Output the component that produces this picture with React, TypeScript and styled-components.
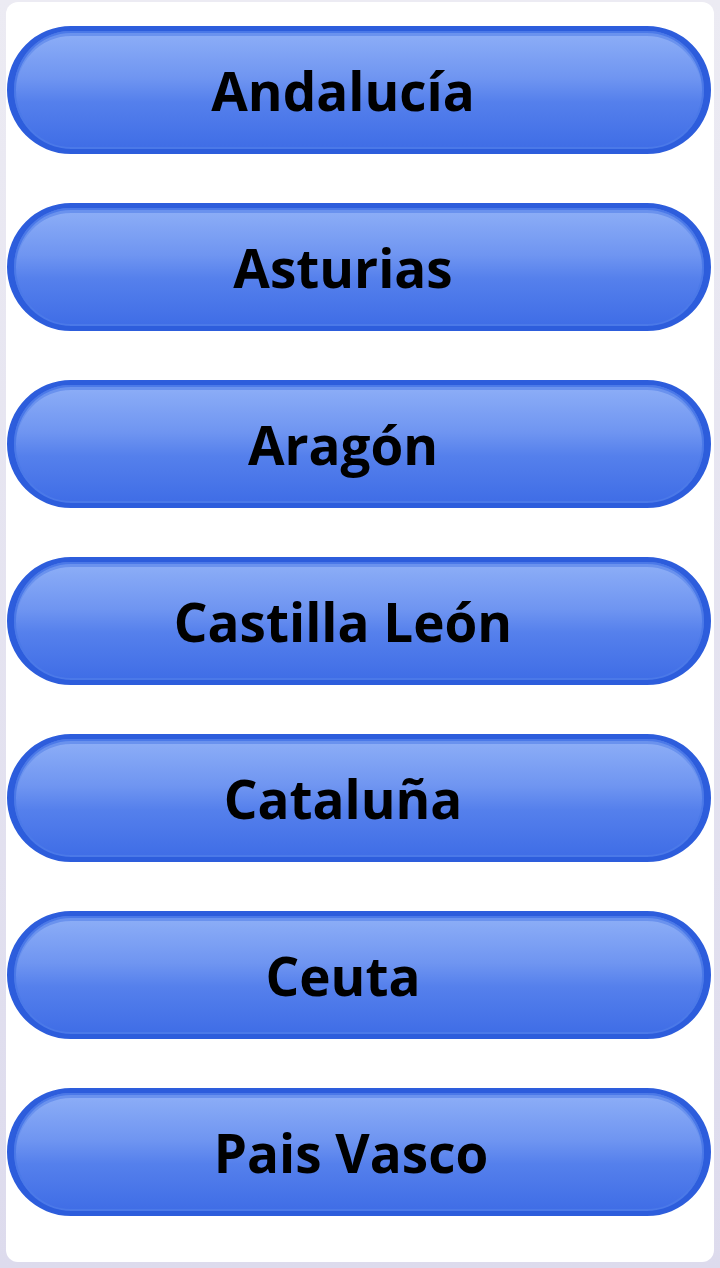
import styled, { createGlobalStyle } from "styled-components";

const GlobalStyle = createGlobalStyle`
  html, body {
    margin: 0;
    padding: 0;
    background: #e2e0ee;
  }
  body {
    font-family: "Open Sans", "Noto Sans", sans-serif;
  }
`;

// start of styled-components

const Screen = styled.div`
  width: 720px;
  height: 1268px;
  box-sizing: border-box;
  padding: 2px 6px 6px 6px;
  background: linear-gradient(180deg, #ecebf3 0%, #dddbed 100%);
`;

const Card = styled.div`
  height: 100%;
  box-sizing: border-box;
  background: #ffffff;
  border-radius: 12px;
  padding: 24px 3px 0 1px;
  display: flex;
  flex-direction: column;
  gap: 49px;
`;

const RegionButton = styled.button<{ $shift?: number }>`
  height: 128px;
  width: 100%;
  box-sizing: border-box;
  border-radius: 64px;
  border: 5px solid #2d5ddc;
  border-left-width: 7px;
  border-right-width: 7px;
  background: linear-gradient(180deg, #8eaff7 0%, #6f95f1 40%, #5580ec 60%, #3f6de6 100%);
  box-shadow: inset 0 0 0 2px #4b79e8, inset 0 3px 0 2px #6a92ee;
  display: flex;
  align-items: center;
  justify-content: center;
  padding: 0 ${(p) => p.$shift ?? 32}px 0 0;
  font-family: "Open Sans", "Noto Sans", sans-serif;
  font-weight: 700;
  font-size: 53px;
  color: #000000;
  cursor: pointer;
`;

// end of styled-components

const regions = [
  { name: "Andalucía" },
  { name: "Asturias" },
  { name: "Aragón" },
  { name: "Castilla León" },
  { name: "Cataluña" },
  { name: "Ceuta" },
  { name: "Pais Vasco", shift: 16 },
];

function App() {
  return (
    <>
      <GlobalStyle />
      <Screen>
        <Card>
          {regions.map((r) => (
            <RegionButton key={r.name} type="button" $shift={r.shift}>
              {r.name}
            </RegionButton>
          ))}
        </Card>
      </Screen>
    </>
  );
}

export default App;
